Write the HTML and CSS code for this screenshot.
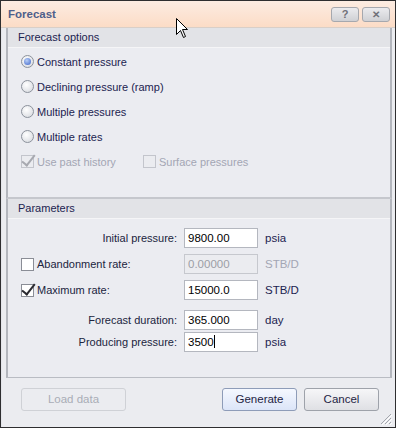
FILE: index.html
```html
<!DOCTYPE html>
<html lang="en">
<head>
	<meta charset="UTF-8">
	<title>Forecast</title>
	<link rel="stylesheet" href="styles.css">
</head>
<body>
<div class="window">
	<div class="titlebar">
		<span class="title">Forecast</span>
		<span class="tbtn">?</span>
		<span class="tbtn x">&#10005;</span>
	</div>
	<div class="content">
		<div class="group options">
			<div class="ghead">Forecast options</div>
			<div class="gbody">
				<div class="row"><span class="radio on"></span>Constant pressure</div>
				<div class="row"><span class="radio"></span>Declining pressure (ramp)</div>
				<div class="row"><span class="radio"></span>Multiple pressures</div>
				<div class="row"><span class="radio"></span>Multiple rates</div>
				<div class="row dis">
					<span class="check dis ticked"></span><span class="first">Use past history</span>
					<span class="check dis"></span>Surface pressures
				</div>
			</div>
		</div>
		<div class="group params">
			<div class="ghead">Parameters</div>
			<div class="grid">
				<div class="lbl">Initial pressure:</div>
				<div class="field">9800.00</div>
				<div class="unit">psia</div>

				<div class="lbl left"><span class="check"></span>Abandonment rate:</div>
				<div class="field off">0.00000</div>
				<div class="unit off">STB/D</div>

				<div class="lbl left"><span class="check ticked"></span>Maximum rate:</div>
				<div class="field">15000.0</div>
				<div class="unit">STB/D</div>

				<div class="lbl spaced">Forecast duration:</div>
				<div class="field spaced">365.000</div>
				<div class="unit spaced">day</div>

				<div class="lbl">Producing pressure:</div>
				<div class="field">3500<span class="caret"></span></div>
				<div class="unit">psia</div>
			</div>
		</div>
		<div class="footer">
			<span class="btn disabled wide">Load data</span>
			<span class="grow"></span>
			<span class="btn default">Generate</span>
			<span class="btn">Cancel</span>
		</div>
		<svg class="grip" width="12" height="12" viewBox="0 0 12 12">
			<path d="M11 1 L1 11 M11 5 L5 11 M11 9 L9 11" stroke="#a4a7ae" stroke-width="1"/>
			<path d="M12 2 L2 12 M12 6 L6 12 M12 10 L10 12" stroke="#ffffff" stroke-width="1"/>
		</svg>
	</div>
	<svg class="cursor" width="13" height="21" viewBox="0 0 13 21">
		<path d="M0.5 0.5 L0.5 16.5 L4.5 12.5 L7.5 19.5 L9.5 18.5 L6.5 11.5 L11.5 11.5 Z" fill="#fff" stroke="#000" stroke-width="1"/>
	</svg>
</div>
</body>
</html>
```
FILE: styles.css
```css
*{
	box-sizing: border-box;
}
body{
	margin: 0;
	font-family: "Liberation Sans", Arial, sans-serif;
	font-size: 11px;
	color: #1c2350;
}
.window{
	position: relative;
	width: 396px;
	height: 428px;
	border: 1px solid #2e2e30;
	display: flex;
	flex-direction: column;
	background: #e9eaee;
}
.titlebar{
	height: 27px;
	display: flex;
	align-items: center;
	padding: 0 5px 0 7px;
	background: linear-gradient(#fcece2, #fcdcc6);
	border-bottom: 1px solid #d9cfc8;
}
.title{
	font-weight: bold;
	font-size: 11.5px;
	color: #4f5f8b;
	flex: 1;
}
.tbtn{
	width: 28px;
	height: 15px;
	margin-left: 3px;
	border: 1px solid #a6a8ae;
	border-radius: 3px;
	background: linear-gradient(#ebebee, #cfd0d4);
	color: #6f7078;
	font-weight: bold;
	font-size: 11px;
	line-height: 13px;
	text-align: center;
}
.tbtn.x{
	font-size: 10px;
}
.content{
	position: relative;
	flex: 1;
	padding: 0 3px 0 4px;
	border-left: 1px solid #e4e5ea;
	display: flex;
	flex-direction: column;
	background: #ebecf0;
}
.group{
	border-left: 2px solid #b3b6bd;
	border-right: 2px solid #b3b6bd;
	background: #ebecf1;
}
.ghead{
	height: 20px;
	line-height: 19px;
	padding-left: 10px;
	font-size: 11px;
	background: #e2e3e7;
	border-bottom: 1px solid #f5f5f7;
}
.options .gbody{
	height: 149px;
	padding: 1px 0 0 13px;
}
.options{
	border-bottom: 2px solid #c5c7cd;
}
.params{
	border-bottom: 1px solid #b9bcc3;
	height: 179px;
}
.row{
	height: 25px;
	display: flex;
	align-items: center;
}
.row.dis{
	color: #a3a6b4;
}
.first{
	width: 106px;
}
.radio{
	width: 13px;
	height: 13px;
	border-radius: 50%;
	border: 1px solid #8c929c;
	background: radial-gradient(circle at 40% 35%, #ffffff, #d3d6dc);
	margin-right: 3px;
	position: relative;
}
.radio.on::after{
	content: "";
	position: absolute;
	left: 2px;
	top: 2px;
	width: 7px;
	height: 7px;
	border-radius: 50%;
	background: radial-gradient(circle at 40% 35%, #b8cff7, #3c62c8);
}
.check{
	width: 13px;
	height: 13px;
	border: 1px solid #8a8d96;
	background: #fff;
	margin-right: 3px;
	position: relative;
	display: inline-block;
	flex: none;
}
.check.dis{
	border-color: #c3c5cc;
	background: #ebecf0;
}
.check.ticked::after{
	content: "";
	position: absolute;
	left: 3px;
	top: -4px;
	width: 5px;
	height: 12px;
	border: solid #2a2a30;
	border-width: 0 2px 2px 0;
	transform: rotate(38deg);
}
.check.dis.ticked::after{
	border-color: #a7a9b0;
}
.grid{
	display: grid;
	grid-template-columns: 156px 74px auto;
	grid-auto-rows: 20px;
	column-gap: 7px;
	row-gap: 6px;
	padding: 9px 0 0 13px;
	align-items: center;
}
.lbl{
	text-align: right;
	color: #20243e;
}
.lbl.left{
	display: flex;
	align-items: center;
	text-align: left;
}
.spaced{
	margin-top: 7px;
}
.field{
	height: 20px;
	border: 1px solid #b4b7bf;
	background: #fff;
	color: #000;
	line-height: 18px;
	padding-left: 3px;
	font-size: 11.5px;
}
.field.off{
	background: #ebecf0;
	color: #9c9ea6;
	border-color: #c6c8ce;
}
.caret{
	display: inline-block;
	width: 1px;
	height: 13px;
	background: #000;
	vertical-align: -2px;
}
.unit{
	font-size: 11.5px;
}
.unit.off{
	color: #a3a6b4;
}
.footer{
	display: flex;
	padding: 10px 13px 0 15px;
	gap: 7px;
}
.grow{
	flex: 1;
}
.btn{
	width: 75px;
	height: 23px;
	line-height: 21px;
	text-align: center;
	border: 1px solid #9ea2aa;
	border-radius: 3px;
	background: linear-gradient(#f6f6f8, #dfe0e4);
	color: #1f2444;
	font-size: 11.5px;
}
.btn.wide{
	width: 105px;
}
.btn.disabled{
	background: #ebecf0;
	border-color: #cfd1d6;
	color: #a9acb6;
}
.btn.default{
	border-color: #8e9cb8;
	background: linear-gradient(#f5f8ff, #dce5f8);
}
.grip{
	position: absolute;
	right: 3px;
	bottom: 2px;
}
.cursor{
	position: absolute;
	left: 175px;
	top: 17px;
}
```
